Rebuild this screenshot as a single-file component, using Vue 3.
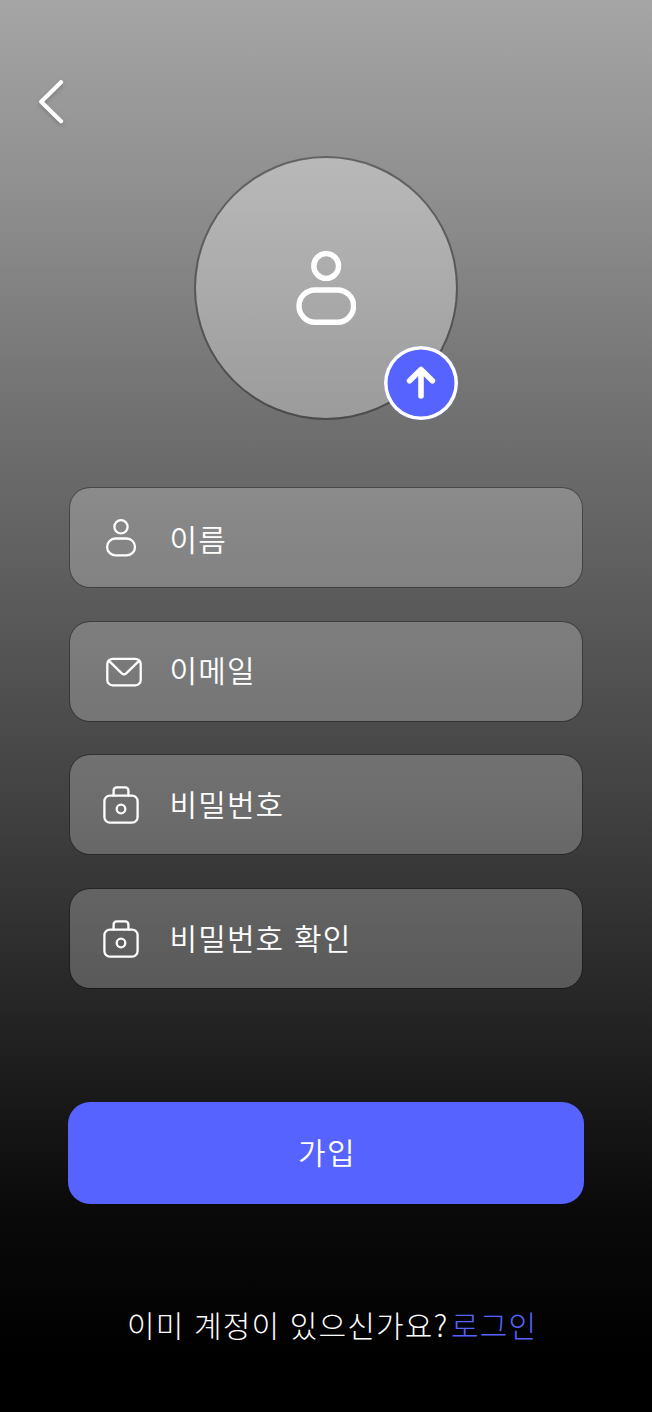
<script setup>
const fields = [
  { id: 'name', label: '이름', icon: 'user' },
  { id: 'email', label: '이메일', icon: 'mail' },
  { id: 'password', label: '비밀번호', icon: 'lock' },
  { id: 'confirm', label: '비밀번호 확인', icon: 'lock' },
]
</script>

<template>
  <main class="screen">
    <header class="topbar">
      <button class="back" type="button">
        <svg width="28" height="46" viewBox="0 0 28 46">
          <path d="M24 3.200 L4.200 22.700 L24 42.200" />
        </svg>
      </button>
    </header>

    <section class="avatar">
      <svg class="person" width="60" height="74" viewBox="0 0 60 74">
        <circle cx="30.200" cy="15" r="12.400" />
        <rect x="3" y="39" width="54.600" height="32.200" rx="16.100" />
      </svg>
      <button class="upload" type="button">
        <svg width="30" height="34" viewBox="0 0 30 34">
          <path d="M15 30 V4 M3.600 14.800 L15 3.500 L26.400 14.800" />
        </svg>
      </button>
    </section>

    <form class="form">
      <div v-for="f in fields" :key="f.id" class="field" :class="f.id">
        <svg class="icon" width="42" height="42" viewBox="0 0 42 42">
          <template v-if="f.icon === 'user'">
            <circle cx="20" cy="9.800" r="6.600" />
            <rect x="6.100" y="21.500" width="27.900" height="16.800" rx="8.400" />
          </template>
          <template v-else-if="f.icon === 'mail'">
            <rect x="6.300" y="8.800" width="33.400" height="26.600" rx="5.500" />
            <path d="M7.700 10.700 L20.800 23.300 Q23 25.300 25.200 23.300 L38.300 10.700" />
          </template>
          <template v-else>
            <rect x="3.400" y="11.700" width="33.200" height="26.900" rx="5.500" />
            <path d="M12.600 11.700 V6.800 Q12.600 3.400 16 3.400 H24 Q27.400 3.400 27.400 6.800 V11.700" />
            <circle cx="20" cy="25" r="4.300" />
          </template>
        </svg>
        <span class="label">{{ f.label }}</span>
      </div>
      <button class="submit" type="button">가입</button>
    </form>

    <p class="footer">
      <span>이미 계정이 있으신가요?</span><a class="login">로그인</a>
    </p>
  </main>
</template>

<style>
body {
  background: #000;
}
</style>

<style scoped>
.screen {
  box-sizing: border-box;
  width: 652px;
  height: 1412px;
  overflow: hidden;
  display: flex;
  flex-direction: column;
  align-items: center;
  font-family: "Noto Sans CJK KR", sans-serif;
  font-weight: 300;
  font-size: 30px;
  color: #fff;
  background: linear-gradient(180deg, #a5a5a5 0, #8e8e8e 200px, #707070 420px, #5b5b5b 600px, #434343 790px, #252525 1010px, #0a0a0a 1210px, #000 1360px);
}

button {
  border: 0;
  padding: 0;
  margin: 0;
  font: inherit;
  color: inherit;
  background: none;
}

svg {
  display: block;
  fill: none;
  stroke: #fff;
  stroke-linecap: round;
  stroke-linejoin: round;
}

.topbar {
  align-self: stretch;
  height: 77px;
  padding: 79px 0 0 37px;
}

.back svg {
  stroke-width: 4.2;
  filter: drop-shadow(0 2px 2px rgba(0, 0, 0, 0.2));
}

.avatar {
  position: relative;
  box-sizing: border-box;
  flex: none;
  width: 264px;
  height: 264px;
  border-radius: 50%;
  border: 2px solid rgba(0, 0, 0, 0.32);
  background: linear-gradient(180deg, rgba(255, 255, 255, 0.35), rgba(255, 255, 255, 0.3));
  background-clip: padding-box;
  display: flex;
  align-items: center;
  justify-content: center;
}

.person {
  stroke-width: 5.4;
}

.upload {
  position: absolute;
  right: -2px;
  bottom: -2px;
  box-sizing: border-box;
  width: 74px;
  height: 74px;
  border-radius: 50%;
  background: #5663ff;
  box-shadow: inset 0 0 0 3.500px #fff;
  display: flex;
  align-items: center;
  justify-content: center;
}

.upload svg {
  stroke-width: 5.6;
}

.form {
  width: 516px;
  margin-top: 67px;
  display: flex;
  flex-direction: column;
  gap: 32.700px;
}

.field {
  box-sizing: border-box;
  height: 101px;
  margin: 0 1px 0 0.500px;
  padding-left: 31px;
  border: 1px solid rgba(0, 0, 0, 0.3);
  border-radius: 21px;
  background: rgba(255, 255, 255, 0.23);
  background-clip: padding-box;
  display: flex;
  align-items: center;
}

.icon {
  stroke-width: 2.3;
}

.label {
  margin-left: 27px;
  padding-bottom: 4px;
  font-weight: 350;
  letter-spacing: 1.1px;
  word-spacing: 2px;
  line-height: 44px;
}

.name .label {
  padding-bottom: 0;
}

.submit {
  height: 102px;
  margin-top: 80px;
  padding: 0 0 4px 2px;
  border-radius: 22px;
  background: #5663ff;
  font-weight: 350;
  letter-spacing: 1.3px;
}

.footer {
  margin: 98px 0 0;
  align-self: stretch;
  padding-left: 127px;
  display: flex;
  gap: 2.500px;
  line-height: 44px;
  letter-spacing: 1.2px;
  word-spacing: 1.500px;
  white-space: nowrap;
}

.login {
  color: #5663ff;
}
</style>
